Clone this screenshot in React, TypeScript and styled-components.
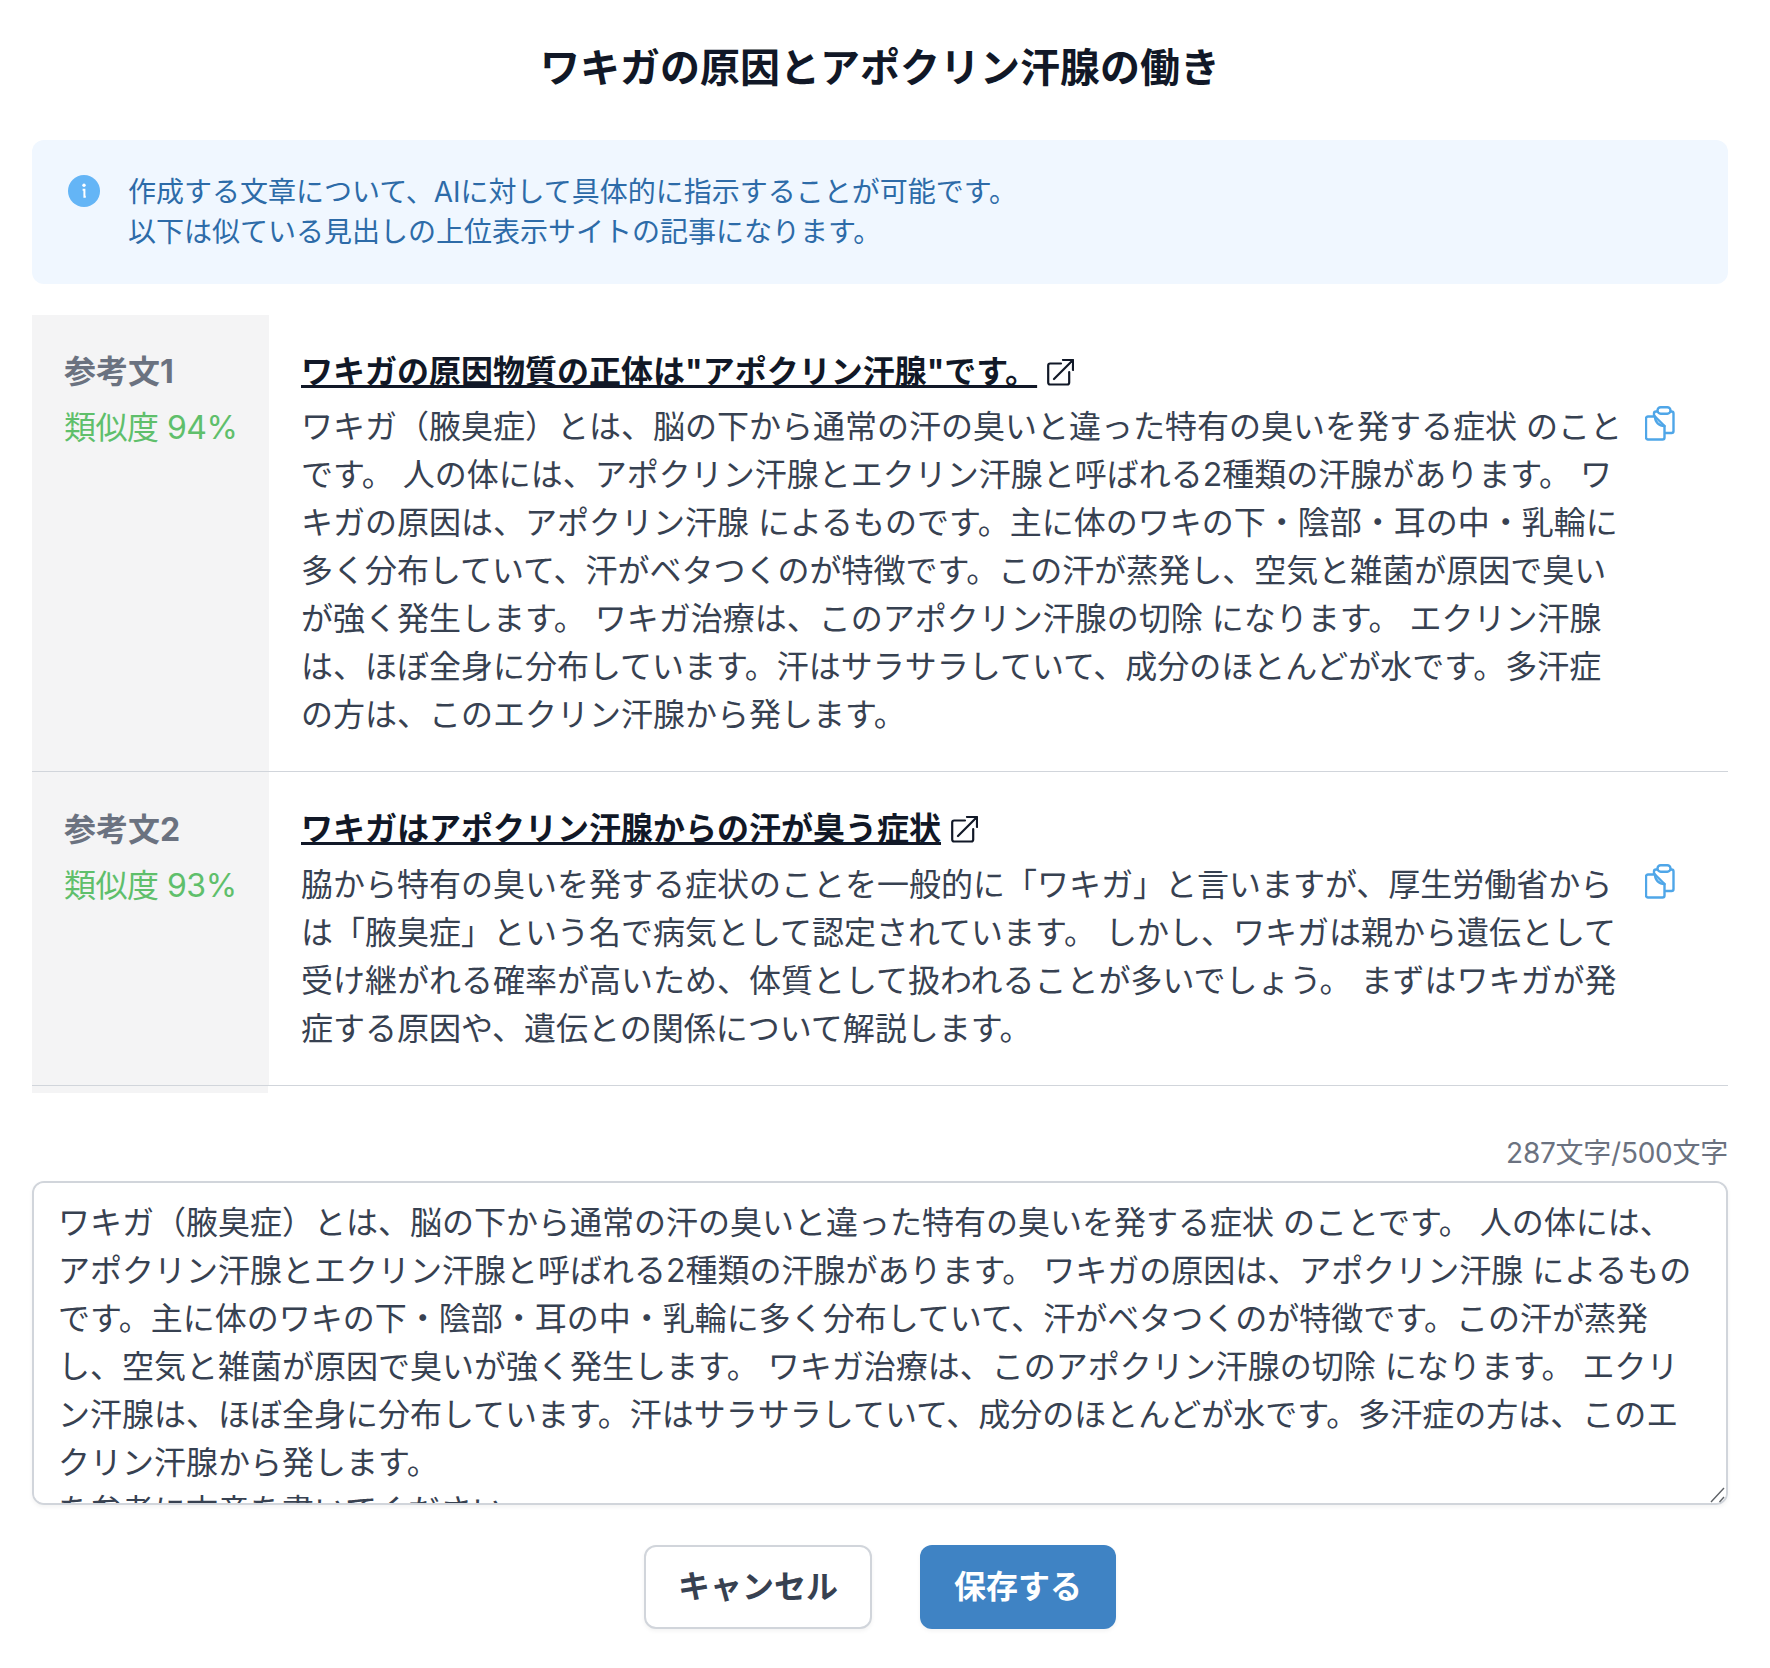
import { createGlobalStyle } from 'styled-components'
import styled from 'styled-components'

const fontStack = `Inter, "Noto Sans CJK JP", "Noto Sans", sans-serif`

const GlobalStyle = createGlobalStyle`
  html, body {
    margin: 0;
    padding: 0;
    background: #ffffff;
  }

  body {
    font-family: ${fontStack};
    overflow: hidden;
  }
`

interface Reference {
  label: string
  similarity: number
  title: string
  body: string
  sideTop: number
  bodyGap: number
}

const references: Reference[] = [
  {
    label: '参考文1',
    similarity: 94,
    title: 'ワキガの原因物質の正体は"アポクリン汗腺"です。',
    body: 'ワキガ（腋臭症）とは、脳の下から通常の汗の臭いと違った特有の臭いを発する症状 のことです。 人の体には、アポクリン汗腺とエクリン汗腺と呼ばれる2種類の汗腺があります。 ワキガの原因は、アポクリン汗腺 によるものです。主に体のワキの下・陰部・耳の中・乳輪に多く分布していて、汗がベタつくのが特徴です。この汗が蒸発し、空気と雑菌が原因で臭いが強く発生します。 ワキガ治療は、このアポクリン汗腺の切除 になります。 エクリン汗腺は、ほぼ全身に分布しています。汗はサラサラしていて、成分のほとんどが水です。多汗症の方は、このエクリン汗腺から発します。',
    sideTop: 33,
    bodyGap: 7,
  },
  {
    label: '参考文2',
    similarity: 93,
    title: 'ワキガはアポクリン汗腺からの汗が臭う症状',
    body: '脇から特有の臭いを発する症状のことを一般的に「ワキガ」と言いますが、厚生労働省からは「腋臭症」という名で病気として認定されています。 しかし、ワキガは親から遺伝として受け継がれる確率が高いため、体質として扱われることが多いでしょう。 まずはワキガが発症する原因や、遺伝との関係について解説します。',
    sideTop: 34,
    bodyGap: 8,
  },
]

const draftText =
  references[0].body + '\nを参考に文章を書いてください。'

const InfoIcon = () => (
  <InfoGlyph viewBox="0 0 20 20" aria-hidden="true">
    <circle cx="10" cy="9.5" r="8" fill="#64b5f6" />
    <circle cx="10" cy="6.6" r="0.85" fill="#ffffff" />
    <path d="M9.3 8.9h.9v3.5h.7" fill="none" stroke="#ffffff" strokeWidth="1" />
  </InfoGlyph>
)

const ExternalIcon = () => (
  <ExternalGlyph viewBox="0 0 27 27" aria-hidden="true">
    <path d="M14 4.5H3.2a2 2 0 0 0-2 2v17a2 2 0 0 0 2 2h17a2 2 0 0 0 2-2V13" />
    <path d="M7 20 26 1M16 1h10v10" />
  </ExternalGlyph>
)

const CopyIcon = () => (
  <CopyGlyph viewBox="0 0 30 35" aria-hidden="true">
    <path d="M9 9.5V7.5a2 2 0 0 1 2-2h15.5a2 2 0 0 1 2 2V25a2 2 0 0 1-2 2h-6" />
    <rect x="12.5" y="1.2" width="13" height="6.5" rx="3.2" fill="#ffffff" />
    <path d="M3 10.5h7l9.5 9.5v11.5a2 2 0 0 1-2 2H3a2 2 0 0 1-2-2v-19a2 2 0 0 1 2-2Z" fill="#ffffff" />
    <path d="M10 10.5c0 5.5 4 9.5 9.5 9.5" />
  </CopyGlyph>
)

const ResizeGrip = () => (
  <GripGlyph viewBox="0 0 15 16" aria-hidden="true">
    <path d="M1 15 14 1M9.5 15 14 10" />
  </GripGlyph>
)

export default function App() {
  return (
    <Page>
      <GlobalStyle />
      <Heading>ワキガの原因とアポクリン汗腺の働き</Heading>

      <Notice>
        <InfoIcon />
        <NoticeText>
          作成する文章について、AIに対して具体的に指示することが可能です。
          <br />
          以下は似ている見出しの上位表示サイトの記事になります。
        </NoticeText>
      </Notice>

      <ReferenceList>
        {references.map((reference) => (
          <ReferenceRow key={reference.label}>
            <SideCell $top={reference.sideTop}>
              <SideLabel>{reference.label}</SideLabel>
              <Similarity>類似度 {reference.similarity}%</Similarity>
            </SideCell>
            <MainCell>
              <TitleLine>
                <TitleLink href="#">{reference.title}</TitleLink>
                <ExternalIcon />
              </TitleLine>
              <BodyLine $gap={reference.bodyGap}>
                <BodyText>{reference.body}</BodyText>
                <CopyButton type="button" aria-label="コピー">
                  <CopyIcon />
                </CopyButton>
              </BodyLine>
            </MainCell>
          </ReferenceRow>
        ))}
        <SideTail />
      </ReferenceList>

      <Counter>287文字/500文字</Counter>
      <DraftBox>
        <Draft defaultValue={draftText} />
        <ResizeGrip />
      </DraftBox>

      <Actions>
        <CancelButton type="button">キャンセル</CancelButton>
        <SaveButton type="button">保存する</SaveButton>
      </Actions>
    </Page>
  )
}

const Page = styled.main`
  box-sizing: border-box;
  width: 1770px;
  height: 1668px;
  padding: 40px 42px 40px 32px;
  color: #374151;
`

const Heading = styled.h1`
  margin: 0 0 44px;
  font-size: 40px;
  line-height: 56px;
  font-weight: 700;
  color: #111827;
  text-align: center;
`

const Notice = styled.div`
  display: flex;
  gap: 24px;
  padding: 32px;
  border-radius: 12px;
  background: #f0f7ff;
`

const InfoGlyph = styled.svg`
  flex: none;
  width: 40px;
  height: 40px;
`

const NoticeText = styled.p`
  margin: 0;
  font-size: 28px;
  line-height: 40px;
  color: #2d6ba8;
`

const ReferenceList = styled.div`
  margin-top: 31px;
`

const ReferenceRow = styled.section`
  display: grid;
  grid-template-columns: 237px 1fr;
  border-bottom: 1px solid #d1d5db;
`

const SideCell = styled.div<{ $top: number }>`
  padding: ${(props) => props.$top}px 32px 32px;
  background: #f4f4f5;
`

const SideLabel = styled.div`
  font-size: 32px;
  line-height: 48px;
  font-weight: 700;
  color: #6b7280;
`

const Similarity = styled.div`
  margin-top: 8px;
  font-size: 32px;
  line-height: 48px;
  letter-spacing: -0.5px;
  color: #5fbf6b;
  white-space: nowrap;
`

const SideTail = styled.div`
  width: 236px;
  height: 7px;
  background: #f4f4f5;
`

const MainCell = styled.div`
  padding: 33px 0 32px 32px;
  min-width: 0;
`

const TitleLine = styled.div`
  display: flex;
  align-items: center;
  gap: 10px;
  height: 48px;
`

const TitleLink = styled.a`
  font-size: 32px;
  line-height: 48px;
  font-weight: 700;
  color: #111827;
  text-decoration: underline;
  text-decoration-thickness: 3px;
`

const ExternalGlyph = styled.svg`
  flex: none;
  width: 27px;
  height: 27px;
  fill: none;
  stroke: #111827;
  stroke-width: 2.2;
  stroke-linecap: round;
  stroke-linejoin: round;
`

const BodyLine = styled.div<{ $gap: number }>`
  display: flex;
  gap: 22px;
  margin-top: ${(props) => props.$gap}px;
`

const BodyText = styled.p`
  margin: 0;
  width: 1322px;
  font-size: 32px;
  line-height: 48px;
  color: #374151;
`

const CopyButton = styled.button`
  flex: none;
  align-self: flex-start;
  margin-top: 3px;
  padding: 0;
  border: 0;
  background: none;
  line-height: 0;
`

const CopyGlyph = styled.svg`
  width: 30px;
  height: 35px;
  fill: none;
  stroke: #4fa6e8;
  stroke-width: 2.4;
  stroke-linecap: round;
  stroke-linejoin: round;
`

const Counter = styled.div`
  margin-top: 40px;
  font-size: 28px;
  line-height: 40px;
  letter-spacing: -0.25px;
  color: #6b7280;
  text-align: right;
`

const DraftBox = styled.div`
  position: relative;
  margin-top: 8px;
`

const Draft = styled.textarea`
  display: block;
  box-sizing: border-box;
  width: 100%;
  height: 324px;
  padding: 16px 24px;
  border: 2px solid #d1d5db;
  border-radius: 12px;
  box-shadow: 0 2px 4px rgba(0, 0, 0, 0.05);
  font-family: ${fontStack};
  font-size: 32px;
  line-height: 48px;
  color: #374151;
  background: #ffffff;
  overflow-y: scroll;
  scrollbar-width: none;
  resize: none;
  outline: none;
`

const GripGlyph = styled.svg`
  position: absolute;
  right: 3px;
  bottom: 2px;
  width: 15px;
  height: 16px;
  fill: none;
  stroke: #5f6368;
  stroke-width: 1.4;
  pointer-events: none;
`

const Actions = styled.div`
  display: flex;
  justify-content: center;
  gap: 48px;
  margin-top: 40px;
`

const BaseButton = styled.button`
  box-sizing: border-box;
  height: 84px;
  padding: 0 32px;
  border-radius: 12px;
  font-family: ${fontStack};
  font-size: 32px;
  line-height: 48px;
  font-weight: 700;
  box-shadow: 0 2px 4px rgba(0, 0, 0, 0.05);
`

const CancelButton = styled(BaseButton)`
  border: 2px solid #d1d5db;
  background: #ffffff;
  color: #374151;
`

const SaveButton = styled(BaseButton)`
  border: 2px solid transparent;
  background: #3f83c4;
  color: #ffffff;
`
